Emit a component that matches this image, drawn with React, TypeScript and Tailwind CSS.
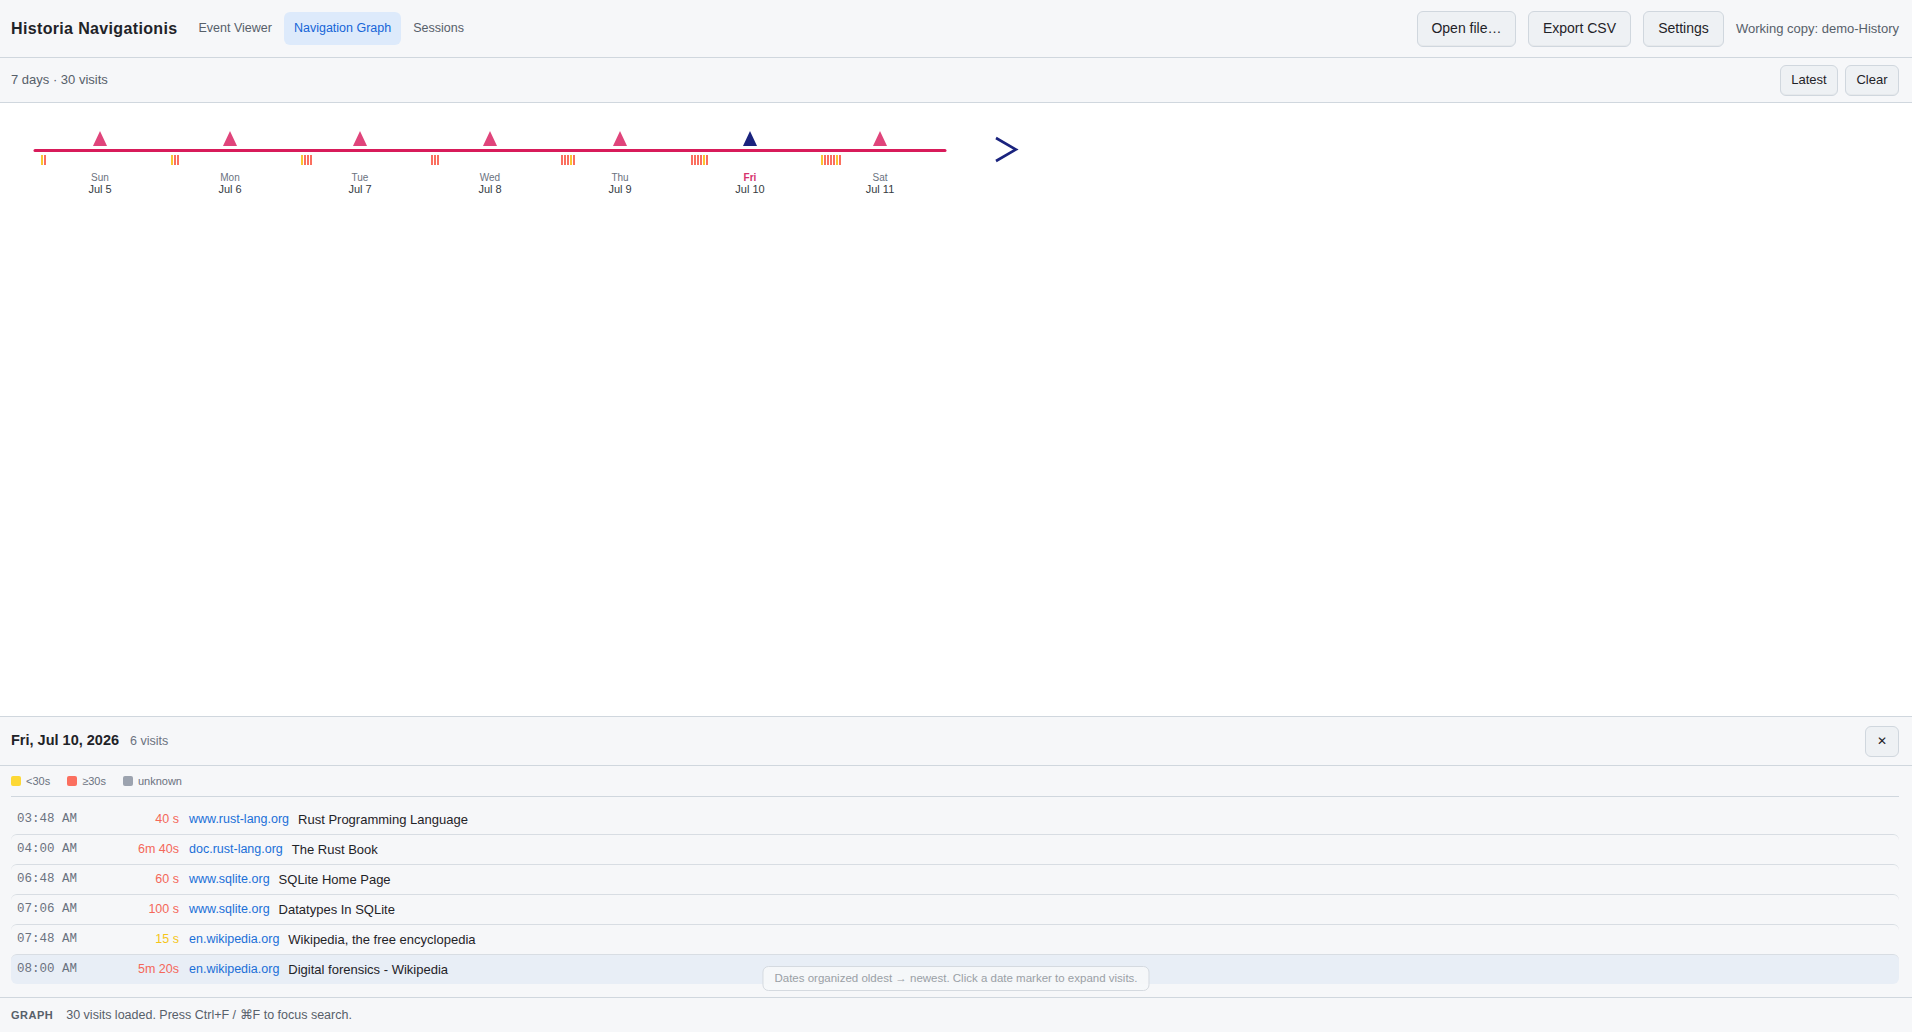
import React from "react";

const days = [
  { wd: "Sun", date: "Jul 5", ticks: "YR" },
  { wd: "Mon", date: "Jul 6", ticks: "YRR" },
  { wd: "Tue", date: "Jul 7", ticks: "YRRR" },
  { wd: "Wed", date: "Jul 8", ticks: "RRR" },
  { wd: "Thu", date: "Jul 9", ticks: "RRRYR" },
  { wd: "Fri", date: "Jul 10", ticks: "RRRRYR", sel: true },
  { wd: "Sat", date: "Jul 11", ticks: "YRRRRYR" },
];

const visits = [
  { t: "03:48 AM", d: "40 s", y: false, host: "www.rust-lang.org", title: "Rust Programming Language" },
  { t: "04:00 AM", d: "6m 40s", y: false, host: "doc.rust-lang.org", title: "The Rust Book" },
  { t: "06:48 AM", d: "60 s", y: false, host: "www.sqlite.org", title: "SQLite Home Page" },
  { t: "07:06 AM", d: "100 s", y: false, host: "www.sqlite.org", title: "Datatypes In SQLite" },
  { t: "07:48 AM", d: "15 s", y: true, host: "en.wikipedia.org", title: "Wikipedia, the free encyclopedia" },
  { t: "08:00 AM", d: "5m 20s", y: false, host: "en.wikipedia.org", title: "Digital forensics - Wikipedia", active: true },
];

function Timeline() {
  return (
    <svg width="1100" height="110" className="block" style={{ fontFamily: "'Liberation Sans', Arial, sans-serif" }}>
      <line x1="35" y1="47.5" x2="945" y2="47.5" stroke="#d81b5a" strokeWidth="3" strokeLinecap="round" />
      {days.map((d, i) => {
        const cx = 100 + 130 * i;
        const sx = 41 + 130 * i;
        return (
          <g key={d.wd}>
            <polygon points={`${cx - 7},43 ${cx},28 ${cx + 7},43`} fill={d.sel ? "#1a237e" : "#e0457b"} />
            {d.ticks.split("").map((c, j) => (
              <rect key={j} x={sx + j * 3} y="52" width="2" height="10" fill={c === "Y" ? "#fbc531" : "#fb6f5f"} />
            ))}
            <text x={cx} y="77.5" textAnchor="middle" fontSize="10" fontWeight={d.sel ? 700 : 400} fill={d.sel ? "#d6336c" : "#6b7280"}>
              {d.wd}
            </text>
            <text x={cx} y="89.5" textAnchor="middle" fontSize="11" fill="#353b42">
              {d.date}
            </text>
          </g>
        );
      })}
      <polyline points="996,35 1016,46.5 996,58" fill="none" stroke="#1a237e" strokeWidth="2.6" />
    </svg>
  );
}

function Btn({ children, className = "" }: { children: React.ReactNode; className?: string }) {
  return (
    <button
      className={
        "rounded-md border border-[#d0d7de] bg-[#eef1f4] text-[#1f2328] shadow-[inset_0_-1px_0_rgba(0,0,0,0.03)] " +
        className
      }
    >
      {children}
    </button>
  );
}

export default function App() {
  return (
    <div
      className="relative flex h-screen w-full flex-col overflow-hidden bg-white text-[#1f2328]"
      style={{ fontFamily: "'Liberation Sans', Arial, sans-serif" }}
    >
      {/* Header */}
      <header className="flex h-[58px] shrink-0 items-center border-b border-[#d0d7de] bg-[#f6f7f9] pl-[11px] pr-[13px]">
        <div className="text-[16px] font-bold tracking-[0.35px] text-[#1f2328]">Historia Navigationis</div>
        <nav className="ml-[11px] flex items-center gap-[2px] text-[12.5px]">
          <span className="rounded-md px-[10px] py-[7px] text-[#57606a]">Event Viewer</span>
          <span className="rounded-md bg-[#ddeafb] px-[10px] py-[7px] text-[#1565d8]">Navigation Graph</span>
          <span className="rounded-md px-[10px] py-[7px] text-[#57606a]">Sessions</span>
        </nav>
        <div className="flex-1" />
        <div className="flex items-center gap-[12px] text-[14px]">
          <Btn className="h-[36px] w-[99px]">Open file…</Btn>
          <Btn className="h-[36px] w-[103px]">Export CSV</Btn>
          <Btn className="h-[36px] w-[81px]">Settings</Btn>
          <span className="text-[13px] text-[#57606a]">Working copy: demo-History</span>
        </div>
      </header>

      {/* Toolbar */}
      <div className="flex h-[45px] shrink-0 items-center border-b border-[#d0d7de] bg-[#f6f7f9] pl-[11px] pr-[13px]">
        <span className="text-[13px] text-[#57606a]">7 days · 30 visits</span>
        <div className="flex-1" />
        <div className="flex items-center gap-[7px] text-[13px]">
          <Btn className="h-[31px] w-[58px]">Latest</Btn>
          <Btn className="h-[31px] w-[54px]">Clear</Btn>
        </div>
      </div>

      {/* Canvas */}
      <main className="min-h-0 flex-1 bg-white">
        <Timeline />
      </main>

      {/* Details panel */}
      <section className="flex h-[281px] shrink-0 flex-col border-t border-[#d0d7de] bg-[#f6f7f9]">
        <div className="flex h-[49px] shrink-0 items-center border-b border-[#d0d7de] pl-[11px] pr-[13px]">
          <span className="text-[14.5px] font-bold text-[#1f2328]">Fri, Jul 10, 2026</span>
          <span className="ml-[11px] text-[12.5px] text-[#6b7280]">6 visits</span>
          <div className="flex-1" />
          <button className="flex h-[31px] w-[34px] items-center justify-center rounded-md border border-[#d0d7de] bg-[#eef1f4] text-[12px] text-[#1f2328]">
            ✕
          </button>
        </div>
        <div className="px-[13px] pl-[11px]">
          <div className="flex h-[31px] items-center gap-[17px] border-b border-[#d0d7de] text-[11px] text-[#6b7280]">
            <span className="flex items-center gap-[5px]">
              <span className="inline-block h-[10px] w-[10px] rounded-[2px] bg-[#fdd835]" />
              &lt;30s
            </span>
            <span className="flex items-center gap-[5px]">
              <span className="inline-block h-[10px] w-[10px] rounded-[2px] bg-[#fb6f5f]" />
              ≥30s
            </span>
            <span className="flex items-center gap-[5px]">
              <span className="inline-block h-[10px] w-[10px] rounded-[2px] bg-[#9ca3af]" />
              unknown
            </span>
          </div>
          <div className="pt-[7px]">
            {visits.map((v, i) => (
              <div
                key={v.t}
                className={
                  "flex h-[30px] items-center rounded-[6px] pl-[6px] text-[13px] " +
                  (i > 0 ? "border-t border-[#d8dde3] " : "border-t border-transparent ") +
                  (v.active ? "bg-[#e8eef6]" : "")
                }
              >
                <span
                  className="w-[86px] shrink-0 text-[12.5px] text-[#6b7280]"
                  style={{ fontFamily: "'Liberation Mono', 'DejaVu Sans Mono', monospace" }}
                >
                  {v.t}
                </span>
                <span className={"w-[76px] shrink-0 text-right text-[12.5px] " + (v.y ? "text-[#f5c518]" : "text-[#f4685a]")}>{v.d}</span>
                <span className="ml-[10px] text-[12.5px] text-[#1a6fd8]">{v.host}</span>
                <span className="ml-[9px] text-[#1f2328]">{v.title}</span>
              </div>
            ))}
          </div>
        </div>
      </section>

      {/* Footer */}
      <footer className="flex h-[35px] shrink-0 items-center border-t border-[#d0d7de] bg-[#f6f7f9] pl-[11px]">
        <span className="text-[11px] font-bold tracking-[0.5px] text-[#57606a]">GRAPH</span>
        <span className="ml-[13px] text-[12.5px] text-[#57606a]">30 visits loaded. Press Ctrl+F / ⌘F to focus search.</span>
      </footer>

      {/* Hint */}
      <div className="absolute bottom-[41px] left-1/2 -translate-x-1/2 whitespace-nowrap rounded-md border border-[#d5dae0] bg-[#f6f7f9]/90 px-[11px] py-[3px] text-[11.5px] text-[#9aa0a6]">
        Dates organized oldest → newest. Click a date marker to expand visits.
      </div>
    </div>
  );
}
